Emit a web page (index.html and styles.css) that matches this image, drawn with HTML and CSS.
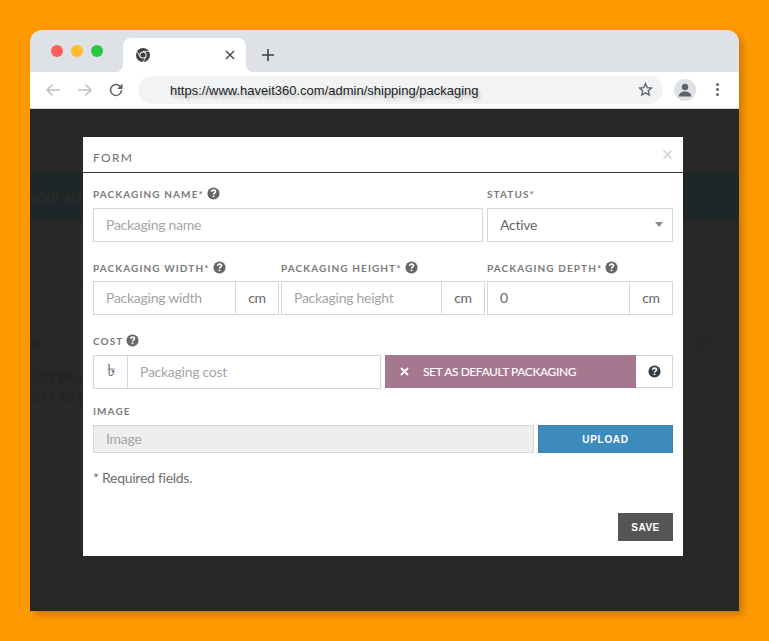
FILE: index.html
```html
<!DOCTYPE html>
<html lang="en">
<head>
<meta charset="utf-8">
<title>Packaging form</title>
<link rel="stylesheet" href="styles.css">
</head>
<body>
<svg class="defs" width="0" height="0" aria-hidden="true">
  <symbol id="help" viewBox="0 0 14 14">
    <circle cx="7" cy="7" r="6.5" fill="currentColor"/>
    <path d="M4.9 5.3c.1-1.2 1-1.9 2.2-1.9 1.2 0 2.1.7 2.1 1.8 0 1.5-2.2 1.5-2.2 3" fill="none" stroke="#fff" stroke-width="1.7"/>
    <rect x="6.1" y="9.2" width="1.8" height="1.7" fill="#fff"/>
  </symbol>
</svg>
<div class="window">
  <div class="tabstrip">
    <div class="lights">
      <span class="light red"></span><span class="light amber"></span><span class="light green"></span>
    </div>
    <div class="tab">
      <svg class="chrome" width="14" height="14" viewBox="0 0 14 14">
        <circle cx="7" cy="7" r="7" fill="#3c4043"/>
        <circle cx="7" cy="7" r="3.6" fill="#fff"/>
        <circle cx="7" cy="7" r="2.6" fill="#3c4043"/>
        <path d="M7 3.4h6M4 8.8 1.2 3.6M9.8 9 7 14" stroke="#fff" stroke-width=".8" fill="none"/>
      </svg>
      <svg class="tabclose" width="10" height="10" viewBox="0 0 10 10"><path d="M1 1l8 8M9 1l-8 8" stroke="#3c4043" stroke-width="1.3"/></svg>
    </div>
    <svg class="newtab" width="12" height="12" viewBox="0 0 12 12"><path d="M6 0v12M0 6h12" stroke="#3c4043" stroke-width="1.6"/></svg>
  </div>
  <div class="toolbar">
    <svg class="navicon" width="16" height="14" viewBox="0 0 16 14"><path d="M15 7H2M7.500 1.500 2 7l5.500 5.500" fill="none" stroke="#bdc1c6" stroke-width="1.500"/></svg>
    <svg class="navicon" width="16" height="14" viewBox="0 0 16 14"><path d="M1 7h13M8.500 1.500 14 7l-5.500 5.500" fill="none" stroke="#bdc1c6" stroke-width="1.500"/></svg>
    <svg class="navicon reload" width="14" height="14" viewBox="0 0 14 14"><path d="M11.800 4.300A5.500 5.500 0 1 0 12.500 7" fill="none" stroke="#5f6368" stroke-width="1.500"/><path d="M13.500 0.600V6H8.200z" fill="#5f6368"/></svg>
    <div class="omnibox">
      <span class="url">https://www.haveit360.com/admin/shipping/packaging</span>
      <svg width="15" height="15" viewBox="0 0 24 24"><path d="M12 2.800l2.800 6.200 6.700.7-5 4.500 1.400 6.600L12 17.400l-5.900 3.400 1.400-6.600-5-4.500 6.700-.7z" fill="none" stroke="#5f6368" stroke-width="2.200"/></svg>
    </div>
    <span class="avatar">
      <svg width="14" height="14" viewBox="0 0 14 14"><circle cx="7" cy="4" r="3.200" fill="#5f6368"/><path d="M0.800 13.500c0-3.400 2.800-5 6.200-5s6.200 1.600 6.200 5z" fill="#5f6368"/></svg>
    </span>
    <span class="kebab"><i></i><i></i><i></i></span>
  </div>
  <div class="content">
    <div class="notice"><span class="notice-text">your acti</span></div>
    <div class="tabsrow"></div>
    <div class="listing">
      <div class="listing-head"><p class="faint head">ne</p><span class="faint-icon"></span></div>
      <p class="faint item">Gift Wrap</p>
      <p class="faint size">20 x 30 cm</p>
    </div>

    <div class="modal">
      <div class="modal-head">
        <span class="modal-title">FORM</span>
        <svg width="9" height="9" viewBox="0 0 9 9"><path d="M.5.500l8 8M8.500.500l-8 8" stroke="#c9c9c9" stroke-width="1.100"/></svg>
      </div>
      <form class="modal-body">
        <div class="row row-a">
          <div class="field">
            <label class="label">PACKAGING NAME*<svg class="help" width="13" height="13"><use href="#help"/></svg></label>
            <div class="control"><input class="input" placeholder="Packaging name"></div>
          </div>
          <div class="field">
            <label class="label">STATUS*</label>
            <div class="control select"><span class="value">Active</span><span class="caret"></span></div>
          </div>
        </div>
        <div class="row row-b">
          <div class="field">
            <label class="label">PACKAGING WIDTH*<svg class="help" width="13" height="13"><use href="#help"/></svg></label>
            <div class="control"><input class="input" placeholder="Packaging width"><span class="addon">cm</span></div>
          </div>
          <div class="field">
            <label class="label">PACKAGING HEIGHT*<svg class="help" width="13" height="13"><use href="#help"/></svg></label>
            <div class="control"><input class="input" placeholder="Packaging height"><span class="addon">cm</span></div>
          </div>
          <div class="field">
            <label class="label">PACKAGING DEPTH*<svg class="help" width="13" height="13"><use href="#help"/></svg></label>
            <div class="control"><input class="input filled" value="0"><span class="addon">cm</span></div>
          </div>
        </div>
        <div class="row row-c">
          <div class="field">
            <label class="label">COST<svg class="help" width="13" height="13"><use href="#help"/></svg></label>
            <div class="control"><span class="addon taka">৳</span><input class="input" placeholder="Packaging cost"></div>
          </div>
          <div class="toggle-group">
            <button type="button" class="toggle">
              <svg width="9" height="9" viewBox="0 0 9 9"><path d="M1 1l7 7M8 1l-7 7" stroke="#fff" stroke-width="1.800"/></svg>
              <span>SET AS DEFAULT PACKAGING</span>
            </button>
            <span class="toggle-help"><svg width="13" height="13" class="dark"><use href="#help"/></svg></span>
          </div>
        </div>
        <div class="field image-field">
          <label class="label">IMAGE</label>
          <div class="upload-row">
            <input class="image-input" placeholder="Image" disabled>
            <button type="button" class="upload">UPLOAD</button>
          </div>
        </div>
        <p class="required">* Required fields.</p>
        <div class="actions"><button type="button" class="save">SAVE</button></div>
      </form>
    </div>
  </div>
</div>
</body>
</html>
```
FILE: styles.css
```css
* { box-sizing: border-box; }
html, body { margin: 0; height: 100%; }
body {
  background: #ff9900;
  padding: 30px;
  overflow: hidden;
  font-family: "Lato", "Liberation Sans", sans-serif;
}
.defs { position: absolute; }
.window {
  width: 709px;
  height: 581px;
  border-radius: 12px 12px 0 0;
  box-shadow: 4px 4px 7px rgba(0, 0, 0, .2);
  display: flex;
  flex-direction: column;
}

/* tab strip */
.tabstrip {
  height: 42px;
  background: #dee1e6;
  border-radius: 12px 12px 0 0;
  display: flex;
  align-items: flex-end;
  padding-left: 21px;
  flex: none;
}
.lights { display: flex; gap: 8px; align-self: flex-start; margin-top: 15px; }
.light { width: 12px; height: 12px; border-radius: 50%; }
.red { background: #ff5f57; }
.amber { background: #ffbd2e; }
.green { background: #27c93f; }
.tab {
  position: relative;
  width: 123px;
  height: 34px;
  margin-left: 20px;
  background: #fff;
  border-radius: 8px 8px 0 0;
  display: flex;
  align-items: center;
  justify-content: space-between;
  padding: 0 11px 0 13px;
}
.tab::before, .tab::after {
  content: "";
  position: absolute;
  bottom: 0;
  width: 8px;
  height: 8px;
}
.tab::before { left: -8px; background: radial-gradient(circle at 0 0, transparent 8px, #fff 8.500px); }
.tab::after { right: -8px; background: radial-gradient(circle at 100% 0, transparent 8px, #fff 8.500px); }
.newtab { margin: 0 0 11px 16px; }

/* toolbar */
.toolbar {
  height: 37px;
  background: #fff;
  border-bottom: 1px solid #d4d4d4;
  display: flex;
  align-items: center;
  padding: 0 0 1px 15px;
  flex: none;
}
.navicon { margin-right: 16px; }
.navicon.reload { margin-left: 0; margin-right: 15px; }
.omnibox {
  width: 525px;
  height: 28px;
  border-radius: 14px;
  background: #f1f3f4;
  display: flex;
  align-items: center;
  justify-content: space-between;
  padding: 0 10px 0 32px;
}
.url {
  font: 13px "Liberation Sans", sans-serif;
  color: #222;
  text-shadow: 2px 3px 3px rgba(0, 0, 0, .22);
  white-space: nowrap;
  margin-top: 2px;
}
.avatar {
  width: 22px;
  height: 22px;
  margin-left: 11px;
  border-radius: 50%;
  background: #dee1e6;
  display: flex;
  align-items: center;
  justify-content: center;
}
.kebab { display: flex; flex-direction: column; gap: 2px; margin-left: 20px; }
.kebab i { width: 3px; height: 3px; border-radius: 50%; background: #5f6368; }

/* dimmed page */
.content {
  position: relative;
  flex: 1;
  background: #282828;
  padding-top: 63px;
  overflow: hidden;
}
.notice {
  height: 49px;
  background: #1e2627;
  padding: 15px 0 0 0;
  font-size: 15px;
  color: #2d2d2b;
}
.tabsrow { height: 62px; border-bottom: 1px solid #222; }
.listing { padding: 51px 0 0 0; }
.listing-head { display: flex; justify-content: space-between; align-items: center; padding-right: 31px; }
.faint { margin: 0; font-size: 13px; color: #222; }
.faint-icon { width: 11px; height: 14px; border: 2px solid #252525; border-top-width: 3px; }
.item { margin-top: 19px; margin-left: 3px; }
.size { margin-top: 4px; }

/* modal */
.modal {
  position: absolute;
  left: 53px;
  top: 28px;
  width: 600px;
  height: 419px;
  background: #fff;
}
.modal-head {
  height: 36px;
  border-bottom: 1px solid #333;
  display: flex;
  align-items: center;
  justify-content: space-between;
  padding: 0 11px 0 10px;
}
.modal-title {
  font-size: 12px;
  letter-spacing: 1.300px;
  color: #6f6f6f;
  margin-top: 5px;
}
.modal-body { display: block; padding: 13px 10px 0; }
.row { display: grid; }
.row-a { grid-template-columns: 390px 186px; column-gap: 4px; margin-bottom: 17px; }
.row-b { grid-template-columns: 186px 204px 186px; column-gap: 2px; margin-bottom: 18px; }
.row-c { grid-template-columns: 288px 288px; column-gap: 4px; margin-bottom: 14px; }
.label {
  height: 22px;
  display: flex;
  align-items: center;
  gap: 3px;
  padding-bottom: 6px;
  font-size: 10px;
  font-weight: 700;
  letter-spacing: 1.100px;
  color: #7a7a7a;
  white-space: nowrap;
}
.row-b .label { padding-bottom: 4px; }
.help { color: #666; margin-top: -2px; }
.control {
  display: flex;
  height: 34px;
  border: 1px solid #d3d6e0;
  background: #fff;
}
.input {
  flex: 1;
  min-width: 0;
  height: 100%;
  border: 0;
  outline: 0;
  padding: 0 12px 2px;
  font: 14px "Lato", sans-serif;
  letter-spacing: -.27px;
  color: #666;
  background: transparent;
}
.input::placeholder { color: #a5a5a5; opacity: 1; }
.addon {
  flex: none;
  width: 43px;
  border-left: 1px solid #d3d6e0;
  display: flex;
  align-items: center;
  justify-content: center;
  padding-bottom: 2px;
  font-size: 14px;
  letter-spacing: -.27px;
  color: #666;
}
.taka {
  width: 34px;
  border-left: 0;
  border-right: 1px solid #d3d6e0;
  font-family: "Noto Sans", "DejaVu Sans", sans-serif;
  font-size: 17px;
}
.select {
  align-items: center;
  justify-content: space-between;
  padding: 0 9px 2px 12px;
  font-size: 14px;
  letter-spacing: -.27px;
  color: #666;
}
.caret {
  width: 0;
  height: 0;
  border-left: 4.500px solid transparent;
  border-right: 4.500px solid transparent;
  border-top: 5px solid #888;
}
.toggle-group { display: flex; height: 33px; align-self: end; margin-bottom: 1px; }
.toggle {
  width: 251px;
  height: 33px;
  border: 0;
  background: #a6788f;
  color: #fff;
  display: flex;
  align-items: center;
  gap: 14px;
  padding: 0 0 0 15px;
  font: 500 12px "Lato", sans-serif;
  letter-spacing: -.42px;
}
.toggle span { margin-top: -1px; }
.toggle-help {
  flex: 1;
  border: 1px solid #d3d6e0;
  border-left: 0;
  display: flex;
  align-items: center;
  justify-content: center;
  color: #333;
}
.dark { color: #333b44; }
.upload-row { display: flex; gap: 4px; height: 28px; }
.image-input {
  width: 441px;
  height: 28px;
  border: 1px solid #d3d6e0;
  background: #eee;
  outline: 0;
  padding: 0 12px 2px;
  font: 14px "Lato", sans-serif;
  letter-spacing: -.27px;
}
.image-input::placeholder { color: #a5a5a5; opacity: 1; }
.upload {
  width: 135px;
  height: 28px;
  border: 1px solid #3a80ab;
  background: #3d8bbc;
  color: #fff;
  font: 700 10px "Liberation Sans", sans-serif;
  letter-spacing: .7px;
}
.required { margin: 16px 0 0; font-size: 14px; line-height: 17px; letter-spacing: -.27px; color: #6f6f6f; }
.actions { display: flex; justify-content: flex-end; margin-top: 27px; }
.save {
  width: 55px;
  height: 28px;
  border: 0;
  background: #555;
  color: #fff;
  font: 700 10px "Liberation Sans", sans-serif;
  letter-spacing: .5px;
}
```
